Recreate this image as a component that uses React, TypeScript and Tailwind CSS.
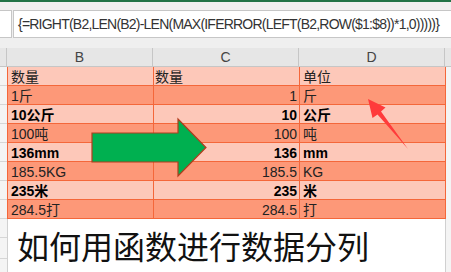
import React from 'react';

type Row = { b: string; c: string; d: string; bold?: boolean; light: boolean };

const rows: Row[] = [
  { b: '数量', c: '数量', d: '单位', light: true },
  { b: '1斤', c: '1', d: '斤', light: false },
  { b: '10公斤', c: '10', d: '公斤', bold: true, light: true },
  { b: '100吨', c: '100', d: '吨', light: false },
  { b: '136mm', c: '136', d: 'mm', bold: true, light: true },
  { b: '185.5KG', c: '185.5', d: 'KG', light: false },
  { b: '235米', c: '235', d: '米', bold: true, light: true },
  { b: '284.5打', c: '284.5', d: '打', light: false },
];

const font = { fontFamily: '"Liberation Sans", "Noto Sans CJK SC", sans-serif' };

const App = () => {
  return (
    <div
      className="relative flex h-[272px] w-[451px] flex-col overflow-hidden bg-white"
      style={font}
    >
      {/* Ribbon edge */}
      <div className="h-[2px] shrink-0 bg-[#217346]" />

      {/* Formula bar */}
      <div className="flex h-[46px] shrink-0 bg-[#efefef] pt-[8px] pb-[10px]">
        <div className="w-[12px] border-y border-r border-[#c6c6c6] bg-white" />
        <div className="ml-[1px] flex flex-1 items-center border-y border-l border-[#c6c6c6] bg-white pl-[4px]">
          <span className="text-[14px] tracking-[-0.78px] whitespace-nowrap text-[#333]">
            {'{=RIGHT(B2,LEN(B2)-LEN(MAX(IFERROR(LEFT(B2,ROW($1:$8))*1,0)))))}'}
          </span>
        </div>
      </div>

      {/* Column headers */}
      <div className="flex h-[19px] shrink-0 border-b border-[#c6c6c6] bg-[#e6e6e6] text-[14px] leading-[18px] text-[#444]">
        <div className="w-[7px] border-r border-[#c6c6c6]" />
        <div className="w-[146px] border-r border-[#c6c6c6] text-center">B</div>
        <div className="w-[146px] border-r border-[#c6c6c6] text-center">C</div>
        <div className="w-[146px] border-r border-[#c6c6c6] text-center">D</div>
        <div className="flex-1" />
      </div>

      {/* Data rows */}
      {rows.map((r, i) => {
        const bg = r.light ? 'bg-[#fdc8b9]' : 'bg-[#fd9878]';
        const weight = r.bold ? 'font-bold text-black' : 'text-[#222]';
        return (
          <div key={i} className="flex h-[19px] shrink-0 text-[14px] leading-[16px]">
            <div className="w-[7px] border-b border-[#d6d6d6] bg-[#f4f4f4]" />
            <div
              className={`flex w-[147px] items-end border-r border-b border-l border-[#f4673a] pl-[3px] whitespace-nowrap ${bg} ${weight}`}
            >
              {r.b}
            </div>
            <div
              className={`flex w-[146px] items-end border-r border-b border-[#f4673a] pr-[2px] whitespace-nowrap ${
                i === 0 ? 'justify-start pl-[1px]' : 'justify-end'
              } ${bg} ${weight}`}
            >
              {r.c}
            </div>
            <div
              className={`flex w-[146px] items-end border-r border-b border-[#f4673a] pl-[3px] whitespace-nowrap ${bg} ${weight}`}
            >
              {r.d}
            </div>
            <div className="flex-1 bg-[#f4f4f4]" />
          </div>
        );
      })}

      {/* Caption text box */}
      <div className="flex flex-1">
        <div className="flex w-[7px] flex-col bg-[#f4f4f4]">
          <div className="h-[19px] border-b border-[#d6d6d6]" />
          <div className="h-[21px] border-b border-[#d6d6d6]" />
          <div className="flex-1" />
        </div>
        <div className="w-[439px] border-x border-[#d0d0d0] bg-white pt-[10px] pl-[9px]">
          <span
            className="text-[32px] leading-[32px] whitespace-nowrap text-[#111]"
            style={{ fontFamily: '"Noto Sans CJK SC", sans-serif' }}
          >
            如何用函数进行数据分列
          </span>
        </div>
        <div className="flex-1 bg-[#f4f4f4]" />
      </div>

      {/* Arrows drawn over the sheet */}
      <svg className="absolute top-0 left-0" width="451" height="272">
        <polygon
          points="92,133 178,133 178,119 206,147.5 178,176 178,162 92,162"
          fill="#00b050"
          stroke="#b23c1e"
          strokeWidth="1.2"
        />
        <polygon
          points="368,99 385.5,107.5 381,111.5 408,149 377.5,114.5 372.5,118"
          fill="#ff3b3b"
        />
      </svg>
    </div>
  );
};

export default App;
